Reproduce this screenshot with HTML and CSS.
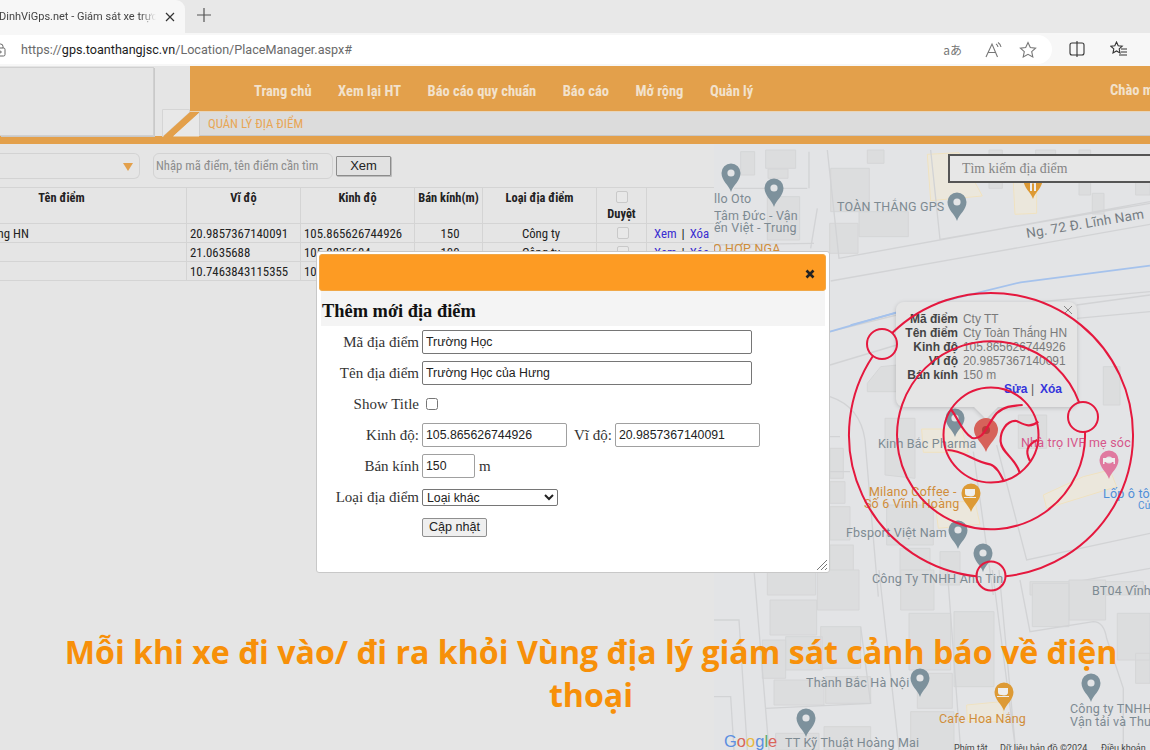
FILE: index.html
```html
<!DOCTYPE html>
<html lang="vi">
<head>
<meta charset="utf-8">
<title>Quản lý địa điểm</title>
<link rel="stylesheet" href="styles.css">
</head>
<body>
<div class="page">
  <div class="tabstrip">
    <div class="tab"><span class="tab-title">DinhViGps.net - Giám sát xe trực tuyến</span>
      <svg class="tab-close" width="10" height="10" viewBox="0 0 10 10"><path d="M1 1l8 8M9 1l-8 8"/></svg>
    </div>
    <svg class="tab-new" width="14" height="14" viewBox="0 0 14 14"><path d="M7 0v14M0 7h14"/></svg>
  </div>
  <div class="addressbar">
    <div class="omnibox">
      <svg class="lock" width="12" height="14" viewBox="0 0 12 14"><rect x="1" y="5" width="9" height="8" rx="1.5"/><path d="M3 5V3.500a2.500 2.500 0 0 1 5 0V5"/><circle cx="5.500" cy="9" r=".8"/></svg>
      <span class="url">https://<b>gps.toanthangjsc.vn</b>/Location/PlaceManager.aspx#</span>
      <span class="translate">aあ</span>
      <svg class="tool" width="20" height="18" viewBox="0 0 20 18"><path d="M2 16L8 3l5.500 13M4.500 11.500h7"/><path d="M12 3c1.200.7 1.800 1.600 2 3M14 1.500c1.600 1 2.600 2.400 3 4.500"/></svg>
      <svg class="tool" width="18" height="18" viewBox="0 0 18 18"><path d="M9 1.500l2.300 5 5.300.6-3.900 3.600 1.100 5.300L9 13.300 4.200 16l1.100-5.300L1.400 7.100l5.300-.6z"/></svg>
    </div>
    <svg class="tool dark split" width="16" height="16" viewBox="0 0 16 16"><rect x="1" y="2" width="14" height="12" rx="2"/><path d="M8 0v16"/></svg>
    <svg class="tool dark favs" width="18" height="16" viewBox="0 0 18 16"><path d="M6.500 1l1.700 3.700 4 .5-3 2.700.8 4-3.500-2-3.500 2 .8-4-3-2.700 4-.5z"/><path d="M11 8h6M11 11h6M9 14h8"/></svg>
  </div>

  <header class="site-head">
    <div class="brand"><div class="logo-box"></div>
      <svg class="notch" width="50" height="71" viewBox="0 0 50 71">
        <path class="notch-tab" d="M2.500 43.500h27v3L3 70.500h-.5z"/>
        <path class="notch-orange" d="M30 46L3 70.500H13L40 46z"/>
        <path class="notch-fold" d="M13 70.500L39 47V70.500z"/>
        <path class="notch-line" d="M39.500 46V70"/>
      </svg>
    </div>
    <div class="head-main">
      <nav class="nav">
        <a>Trang chủ</a><a>Xem lại HT</a><a>Báo cáo quy chuẩn</a><a>Báo cáo</a><a>Mở rộng</a><a>Quản lý</a>
        <span class="hello">Chào mừng</span>
      </nav>
      <div class="crumb"><span>QUẢN LÝ ĐỊA ĐIỂM</span></div>
    </div>
  </header>
  <div class="head-strip"></div>

  <main class="content">
    <section class="list">
      <div class="filters">
        <div class="fake-select"><i class="caret"></i></div>
        <div class="fake-search">Nhập mã điểm, tên điểm cần tìm</div>
        <button class="xem">Xem</button>
      </div>
      <table class="grid">
        <colgroup><col class="c1"><col class="c2"><col class="c3"><col class="c4"><col class="c5"><col class="c6"><col class="c7"></colgroup>
        <thead>
          <tr><th>Tên điểm</th><th>Vĩ độ</th><th>Kinh độ</th><th>Bán kính(m)</th><th>Loại địa điểm</th><th><i class="cb"></i><span>Duyệt</span></th><th></th></tr>
        </thead>
        <tbody>
          <tr><td class="name">Cty Toàn Thắng HN</td><td>20.9857367140091</td><td>105.865626744926</td><td class="mid">150</td><td class="mid">Công ty</td><td class="mid"><i class="cb"></i></td><td class="acts"><a>Xem</a><span class="sep">|</span><a>Xóa</a></td></tr>
          <tr><td></td><td>21.0635688</td><td>105.8835684</td><td class="mid">100</td><td class="mid">Công ty</td><td class="mid"><i class="cb"></i></td><td class="acts"><a>Xem</a><span class="sep">|</span><a>Xóa</a></td></tr>
          <tr><td></td><td>10.7463843115355</td><td>106.6583</td><td class="mid">100</td><td class="mid">Công ty</td><td class="mid"><i class="cb"></i></td><td class="acts"><a>Xem</a><span class="sep">|</span><a>Xóa</a></td></tr>
        </tbody>
      </table>
    </section>

    <section class="map">
      <svg class="map-svg" width="436" height="606" viewBox="714 144 436 606">
        <defs>
          <g id="pin"><path d="M0 19C-2 12-9.500 8-9.500 0A9.500 9.500 0 1 1 9.500 0C9.500 8 2 12 0 19Z"/><circle r="3.600" class="hole"/></g>
        </defs>
        <rect class="land" x="714" y="144" width="436" height="606"/>

        <!-- upper part, drawn at 3x -->
        <g class="shapes" transform="translate(714 145) scale(.3333)">
          <path class="bld" d="M80 20h42v70H80zM155 15h90v55h-90zM162 72h60v28h-60zM160 155h97v130h-97zM350 70h116v130H350zM435 200h148v75H435zM347 235h85v90h-85zM460 15h50v40h-50zM825 15h40v115h-40zM965 15h60v50h-60zM1095 15h35v135h-35zM1135 145h35v62h-35zM1265 60h43v90h-43z"/>
          <path class="lot" d="M640 28l95-5 70 130-155 14z"/>
          <path class="lot" d="M898 110h70v95l-65 3z"/>
          <path class="edge" d="M340 15l35 325 933-170M310 190l-20 120M650 15l28 268 630-108M60 130l220 0M285 20v110M350 408l958-170M0 300l300-5"/>
          <path class="water" d="M410 540l150-40 360-88 388-50"/>
        </g>

        <!-- middle part, drawn at 3x -->
        <g class="shapes" transform="translate(830 285) scale(.3333)">
          <path class="bld" d="M112 295l40-50 50-5v80h-90zM165 400h90v180l-90-10zM0 490h40v90H0zM0 590h45v65H0zM0 665h60v100H0zM0 780h70v80H0zM170 660h140v120H170zM210 790h90v120h-90zM330 800h60v100h-60zM820 245h50v115h-50zM565 390h85v100h-85zM600 890h340v40H600z"/>
          <path class="lot" d="M275 432h120l20 70H280zM315 650h120l15 68-125 12zM640 630l120-55 80-20 20 50-210 65z"/>
          <path class="edge" d="M0 140l200-50 760-70M0 240l200-60M740 100l220-20M740 60l220-30M0 335c60 20 95 60 105 130l40 470M500 480l90 345 370-80M430 500l60 430M0 455h30M0 560h60M960 850l-220 40-80 40"/>
          <path class="water" d="M0 140l200-58"/>
        </g>

        <!-- lower part, drawn at 3x -->
        <g class="shapes" transform="translate(714 570) scale(.3333)">
          <path class="bld" d="M160 0h145v75H160zM310 0h125v120H310zM168 90h140v105H168zM320 170h120v125H320zM145 210h70v115h-70zM215 200h110v100H215zM180 330h150v75H180zM335 320h135v80H335zM560 0h100v120H560zM585 130h125v170H585zM720 125h120v225H720zM610 310h105v105H610zM590 425h130v120H590zM955 40h110v130H955zM1065 30h110v120h-110zM1210 130h98v140h-98zM1265 250h43v90h-43zM185 490h130v50H185zM330 470h140v70H330z"/>
          <path class="lot" d="M758 405l105-10 10 60H760z"/>
          <path class="edge" d="M120 0l45 540M155 415l315-15-30-230M495 0l60 540M700 0l40 540M835 0l70 540M855 0l50 540M918 30l30 155 190-30c25 0 35 20 40 50l50 150 0 190M0 150h75l25 390M0 380h50l10 160"/>
        </g>

        <g class="label grey">
          <text x="714" y="203">llo Oto</text>
          <text x="714" y="220">Tâm Đức - Vận</text>
          <text x="714" y="232">ến Việt - Trung</text>
          <text x="837" y="211">TOÀN THẮNG GPS</text>
          <text x="878" y="448">Kinh Bắc Pharma</text>
          <text x="846" y="537">Fbsport Việt Nam</text>
          <text x="872" y="583">Công Ty TNHH Anh Tin</text>
          <text x="1092" y="595">BT04 Vĩnh</text>
          <text x="806" y="687">Thành Bắc Hà Nội</text>
          <text x="1070" y="713">Công ty TNHH</text>
          <text x="1070" y="726">Vận tải và Thu</text>
          <text x="785" y="747">TT Kỹ Thuật Hoàng Mai</text>
          <text class="road-name" transform="translate(1027 238) rotate(-9.500)">Ng. 72 Đ. Lĩnh Nam</text>
        </g>
        <g class="label orange">
          <text x="713" y="253">O HỢP NGA</text>
          <text x="869" y="496">Milano Coffee -</text>
          <text x="864" y="508">Số 6 Vĩnh Hoàng</text>
          <text x="939" y="723">Cafe Hoa Nắng</text>
        </g>
        <text class="label pink" x="1021" y="447">Nhà trọ IVF mẹ sóc</text>
        <text class="label blue" x="1103" y="498">Lốp ô tô</text>
        <text class="label blue small" x="1138" y="509">Cử</text>

        <g class="pins grey-pin">
          <use href="#pin" x="731" y="173"/><use href="#pin" x="774" y="188"/><use href="#pin" x="957" y="202"/>
          <use href="#pin" x="955" y="418"/><use href="#pin" x="958" y="530"/><use href="#pin" x="983" y="553"/>
          <use href="#pin" x="920" y="678"/><use href="#pin" x="1091" y="683"/><use href="#pin" x="806" y="718"/>
        </g>
        <g class="pins orange-pin">
          <use href="#pin" x="1033" y="180"/><use href="#pin" x="971" y="493"/><use href="#pin" x="1004" y="692"/>
        </g>
        <path class="glyph" d="M1030 183v8h2v-8zM1034 183v8h2v-8z"/>
        <path class="glyph" d="M965 489h10v4a3 3 0 0 1-3 3h-4a3 3 0 0 1-3-3zM964 497h12v1h-12zM998 688h10v4a3 3 0 0 1-3 3h-4a3 3 0 0 1-3-3zM997 696h12v1h-12z"/>
        <g class="pins pink-pin"><use href="#pin" x="1109" y="460"/></g>
        <path class="glyph" d="M1103 458h12v6h-1.500v-2h-9v2H1103zM1105 458h3v2h-3z"/>

        <g class="bubble">
          <path class="bubble-box" d="M904 302h165a8 8 0 0 1 8 8v89a8 8 0 0 1-8 8h-71l-12 12-12-12h-70a8 8 0 0 1-8-8v-89a8 8 0 0 1 8-8z"/>
          <path class="bubble-x" d="M1064 306l8 8M1072 306l-8 8"/>
          <g class="b-k">
            <text x="958" y="323">Mã điểm</text><text x="958" y="337">Tên điểm</text><text x="958" y="351">Kinh độ</text><text x="958" y="365">Vĩ độ</text><text x="958" y="379">Bán kính</text>
          </g>
          <g class="b-v">
            <text x="963" y="323">Cty TT</text><text x="963" y="337">Cty Toàn Thắng HN</text><text x="963" y="351">105.865626744926</text><text x="963" y="365">20.9857367140091</text><text x="963" y="379">150 m</text>
          </g>
          <text class="b-l" x="1004" y="393">Sửa</text><text class="b-s" x="1031" y="393">|</text><text class="b-l" x="1040" y="393">Xóa</text>
        </g>

        <path class="marker" d="M986 452C983 443 974 438 974 430A12 12 0 1 1 998 430C998 438 989 443 986 452Z"/>
        <circle class="marker-dot" cx="986" cy="430" r="4"/>

        <g class="rings">
          <path d="M892.200 333A142 142 0 1 1 1005.800 576.200"/>
          <path d="M976.200 576.200A142 142 0 0 1 873.100 355.800"/>
          <path d="M1085 432A94 94 0 1 1 1079.200 402.600"/>
          <circle cx="991" cy="435" r="47.500"/>
          <circle cx="882" cy="344" r="15"/>
          <circle cx="1083" cy="417" r="15"/>
          <circle cx="991" cy="576" r="14.500"/>
          <g transform="translate(830 285) scale(.3333)" class="curls">
            <path d="M362 372C385 400 395 440 425 458C460 470 470 420 500 385C520 365 545 362 578 360"/>
            <path d="M352 495C400 495 430 530 480 538C500 545 510 565 520 585"/>
            <path d="M625 410C600 430 585 420 560 408C530 405 510 440 512 470C515 505 555 515 570 565"/>
            <path d="M622 465C590 480 585 500 600 528"/>
          </g>
        </g>

        <text class="google" x="724" y="747"><tspan class="g-b">G</tspan><tspan class="g-r">o</tspan><tspan class="g-y">o</tspan><tspan class="g-b">g</tspan><tspan class="g-g">l</tspan><tspan class="g-r">e</tspan></text>
        <g class="attrib">
          <text x="954" y="751">Phím tắt</text><text x="1000" y="751">Dữ liệu bản đồ ©2024</text><text x="1101" y="751">Điều khoản</text>
        </g>
      </svg>
      <input class="map-search" type="text" placeholder="Tìm kiếm địa điểm">
    </section>
  </main>

  <div class="dialog">
    <div class="dialog-bar"><svg class="dialog-x" width="10" height="10" viewBox="0 0 10 10"><path d="M1.500 1.500l7 7M8.500 1.500l-7 7"/></svg></div>
    <h2 class="dialog-title">Thêm mới địa điểm</h2>
    <form class="form">
      <label>Mã địa điểm</label><div class="f"><input class="w-full" value="Trường Học"></div>
      <label>Tên địa điểm</label><div class="f"><input class="w-full" value="Trường Học của Hưng"></div>
      <label>Show Title</label><div class="f"><input class="check" type="checkbox"></div>
      <label>Kinh độ:</label><div class="f"><input class="w-coord" value="105.865626744926"><span class="inline-label">Vĩ độ:</span><input class="w-coord" value="20.9857367140091"></div>
      <label>Bán kính</label><div class="f"><input class="w-radius" value="150"><span class="unit">m</span></div>
      <label>Loại địa điểm</label><div class="f"><select class="w-type"><option>Loại khác</option></select></div>
      <span></span><div class="f"><button class="update" type="button">Cập nhật</button></div>
    </form>
    <svg class="grip" width="12" height="12" viewBox="0 0 12 12"><path d="M1 11L11 1M5 11l6-6M9 11l2-2"/></svg>
  </div>

  <p class="caption">Mỗi khi xe đi vào/ đi ra khỏi Vùng địa lý giám sát cảnh báo về điện thoại</p>
</div>
</body>
</html>
```

FILE: styles.css
```css
* { box-sizing: border-box; }
html, body { margin: 0; height: 100%; overflow: hidden; }
body { background: #e5e5e5; font-family: "Liberation Sans", Arial, sans-serif; }
.page { position: relative; width: 1150px; height: 750px; overflow: hidden; display: flex; flex-direction: column; }

/* browser chrome */
.tabstrip { height: 33px; background: #e8e8e8; display: flex; align-items: center; flex: none; }
.tab { width: 185px; height: 33px; background: #f7f7f7; border-radius: 0 9px 0 0; display: flex; align-items: center; overflow: hidden; }
.tab-title { width: 157px; margin-left: -1px; white-space: nowrap; overflow: hidden; font: 11px Roboto, sans-serif; color: #444; flex: none; -webkit-mask-image: linear-gradient(to right, #000 90%, transparent); mask-image: linear-gradient(to right, #000 90%, transparent); }
.tab-close { margin-left: 9px; flex: none; }
.tab-close path { stroke: #333; stroke-width: 1.2; fill: none; }
.tab-new { margin-left: 12px; margin-top: -3px; }
.tab-new path { stroke: #555; stroke-width: 1.2; fill: none; }
.addressbar { height: 33px; background: #f7f7f7; display: flex; align-items: center; flex: none; position: relative; }
.omnibox { width: 1058px; height: 29px; margin-left: -6px; background: #fff; border-radius: 0 15px 15px 0; display: flex; align-items: center; flex: none; }
.lock { margin-left: 1px; flex: none; fill: none; stroke: #666; }
.url { margin-left: 14px; font: 12.6px Roboto, sans-serif; color: #6a6a6a; white-space: nowrap; flex: 1; }
.url b { font-weight: 400; color: #1c1c1c; }
.translate { font: 12px "Noto Sans CJK JP", "Noto Sans", sans-serif; color: #777; margin-right: 22px; }
.tool { fill: none; stroke: #777; stroke-width: 1.100; flex: none; margin-right: 15px; }
.tool.dark { stroke: #333; }
.split { position: absolute; left: 1069px; top: 8px; margin: 0; }
.favs { position: absolute; left: 1110px; top: 8px; margin: 0; }

/* site header */
.site-head { height: 70px; display: flex; flex: none; background: #e5e5e5; }
.brand { width: 190px; flex: none; display: flex; position: relative; align-items: flex-start; }
.logo-box { width: 154px; height: 69px; margin-top: 1px; background: #e5e5e5; border: 1px solid #d0d0d0; border-left: 0; box-shadow: 1px 1px 0 #c9c9c9; flex: none; }
.notch { position: absolute; left: 160px; top: 0; z-index: 1; }
.notch-tab { fill: #e8e8e8; stroke: #d5d5d5; }
.notch-orange { fill: #e3a04b; }
.notch-fold { fill: #e8e8e8; }
.notch-line { stroke: #cfcfcf; fill: none; }
.head-main { flex: 1; display: flex; flex-direction: column; }
.nav { height: 46px; background: #e3a04b; display: flex; align-items: center; padding: 5px 0 0 64px; gap: 26.5px; position: relative; border-bottom: 1px solid #e8d5ba; }
.nav a, .hello { font: 700 14.5px "Roboto Condensed", "Liberation Sans Narrow", Roboto, sans-serif; color: #f2e2cd; white-space: nowrap; }
.hello { position: absolute; left: 920px; top: 16px; }
.crumb { height: 24px; background: #dcdcdc; padding-left: 18px; display: flex; align-items: center; border-bottom: 1px solid #c8c8c8; }
.crumb span { font: 12.8px "Roboto Condensed", "Liberation Sans Narrow", Roboto, sans-serif; color: #e8a655; }
.head-strip { height: 8px; background: #e3a04b; flex: none; }

/* body */
.content { flex: 1; display: flex; min-height: 0; }
.list { width: 714px; flex: none; overflow: hidden; background: #e5e5e5; }
.filters { height: 43px; display: flex; align-items: center; }
.fake-select { width: 140px; height: 26px; border: 1px solid #d3d3d3; border-left: 0; border-radius: 0 6px 6px 0; position: relative; }
.caret { position: absolute; right: 6px; top: 9px; border: 5px solid transparent; border-top: 8px solid #e3a04b; border-bottom: 0; }
.fake-search { width: 180px; height: 26px; margin-left: 13px; border: 1px solid #d3d3d3; border-radius: 6px; font: 12.7px/24px "Roboto Condensed", "Liberation Sans Narrow", Roboto, sans-serif; color: #8c8c8c; padding-left: 2px; white-space: nowrap; overflow: hidden; }
.xem { width: 55px; height: 20px; margin-left: 3px; padding: 0; border: 1px solid #8c8c8c; border-radius: 1px; background: #e2e2e2; box-shadow: 1px 1px 0 #bbb; font: 13px "Liberation Sans", sans-serif; color: #222; }

.grid { border-collapse: collapse; table-layout: fixed; width: 778px; margin-left: -64px; font: 12.8px "Roboto Condensed", "Liberation Sans Narrow", Roboto, sans-serif; color: #222; }
.c1 { width: 250px; } .c2 { width: 114px; } .c3 { width: 114px; } .c4 { width: 68px; } .c5 { width: 114px; } .c6 { width: 50px; } .c7 { width: 68px; }
.grid th, .grid td { border: 1px solid #d4d4d4; padding: 0 3px; overflow: hidden; white-space: nowrap; }
.grid th { height: 36px; vertical-align: top; font-size: 12.4px; font-weight: 700; padding-top: 3px; line-height: 14px; }
.grid th span { display: block; margin-top: 4px; }
.grid td { height: 19px; line-height: 17px; }
.grid .name { padding-left: 0; text-indent: -5px; }
.grid .mid { text-align: center; padding-left: 6px; }
.grid .acts { padding-left: 7px; }
.acts a { color: #3a2ed1; }
.sep { margin: 0 5px; }
.cb { display: block; width: 12px; height: 12px; margin: 0 auto; border: 1px solid #c9c9c9; border-radius: 2px; background: #e8e8e8; }

/* map */
.map { flex: 1; position: relative; overflow: hidden; }
.map-svg { display: block; }
.land { fill: #e3e4e6; }
.bld { fill: #dcddde; stroke: #d5d6d7; stroke-width: 3; }
.lot { fill: #ebe7dc; stroke: #f0e2c0; stroke-width: 3; }
.edge { fill: none; stroke: #d2d3d5; stroke-width: 4; }
.water { fill: none; stroke: #a5c2ec; stroke-width: 5; }
.label text, text.label { font: 12.5px Roboto, sans-serif; letter-spacing: .2px; }
.grey { fill: #7d8a92; }
.label .road-name { font-size: 13.5px; fill: #757c82; }
.orange { fill: #d08d3a; }
.pink { fill: #d6568a; }
.blue { fill: #4f8fd8; }
text.small { font-size: 10px; }
.grey-pin { fill: #7d919c; }
.orange-pin { fill: #dd9a35; }
.pink-pin { fill: #e07aa0; }
.hole { fill: #e3e4e6; }
.glyph { fill: #eee; }
.bubble-box { fill: #e5e5e5; filter: drop-shadow(0 1px 2px rgba(0,0,0,.18)); }
.bubble-x { stroke: #888; stroke-width: 1; fill: none; }
.b-k text { font: 700 12px "Liberation Sans", sans-serif; fill: #444; text-anchor: end; }
.b-v text { font: 11.9px "Liberation Sans", sans-serif; fill: #7a7a7a; }
.b-l { font: 700 12px "Liberation Sans", sans-serif; fill: #3535dc; }
.b-s { font: 12px "Liberation Sans", sans-serif; fill: #555; }
.marker { fill: #d6625a; }
.marker-dot { fill: #b23f3a; }
.rings { fill: none; stroke: #e5183e; stroke-width: 2; }
.curls { stroke-width: 6.5; }
.google { font: 16.5px "Liberation Sans", sans-serif; }
.g-b { fill: #5c8fe0; } .g-r { fill: #d9655a; } .g-y { fill: #e8b93f; } .g-g { fill: #5cab6e; }
.attrib text { font: 9px Roboto, sans-serif; fill: #444; }
.map-search { position: absolute; left: 234px; top: 10px; width: 210px; height: 29px; padding: 0 0 0 12px; background: #e7e7e7; border: 2px solid #555; border-right: 0; font: 13.8px "Liberation Serif", serif; }
.map-search::placeholder { color: #858585; opacity: 1; }

/* dialog */
.dialog { position: absolute; left: 316px; top: 251px; width: 514px; height: 322px; background: #fff; border: 1px solid #c8c8c8; border-radius: 3px; padding: 2px 3px 2px 2px; font: 15px "Liberation Serif", serif; color: #333; }
.dialog-bar { height: 37px; background: #fd9b23; border: 1px solid #f0a848; border-radius: 3px; position: relative; }
.dialog-x { position: absolute; right: 10px; top: 14px; }
.dialog-x path { stroke: #222; stroke-width: 2.6; }
.dialog-title { margin: 0 1px 0 2px; height: 35px; padding: 8px 1px 0; background: #f4f4f4; font: 700 18.4px/24px "Liberation Serif", serif; color: #111; }
.form { display: grid; grid-template-columns: 100px 1fr; column-gap: 3px; row-gap: 7px; align-items: center; margin-top: 4px; }
.form label { text-align: right; line-height: 24px; }
.f { display: flex; align-items: center; min-height: 24px; }
.form input { height: 24px; font: 12.3px "Liberation Sans", sans-serif; color: #222; padding: 0 3px; border: 1px solid #767676; border-radius: 2px; background: #fff; }
.w-full { width: 330px; }
.form .w-coord { width: 145px; border-color: #a0a0a0; }
.form .w-radius { width: 53px; border-color: #a0a0a0; }
.form input.check { width: 12px; height: 12px; margin: 0 0 0 4px; }
.inline-label { margin: 0 3px 0 7px; }
.unit { margin-left: 4px; }
.w-type { width: 136px; height: 17px; font: 12.3px "Liberation Sans", sans-serif; padding: 0; border: 1px solid #767676; border-radius: 2px; background: #fff; color: #222; }
.update { width: 65px; height: 19px; padding: 0; font: 12.6px "Liberation Sans", sans-serif; border: 1px solid #8f8f8f; border-radius: 2px; background: #efefef; color: #222; margin-top: -2px; }
.grip { position: absolute; right: 1px; bottom: 1px; fill: none; stroke: #777; stroke-width: 1; }

/* caption */
.caption { position: absolute; left: 61px; top: 630px; width: 1060px; margin: 0; text-align: center; font: 700 32.15px/43px "Open Sans", sans-serif; color: #f79009; }
```
